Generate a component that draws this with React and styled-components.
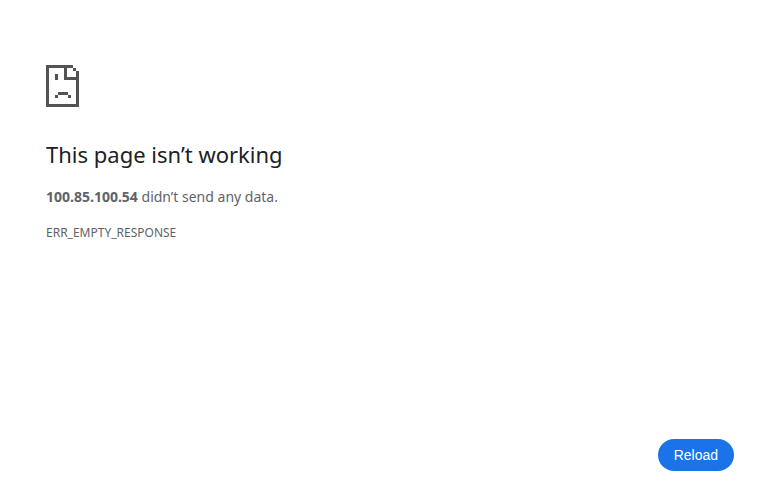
import React from 'react';
import styled, { createGlobalStyle } from 'styled-components';

const GlobalStyle = createGlobalStyle`
  *, *::before, *::after { box-sizing: border-box; }
  body {
    margin: 0;
    background: #fff;
    color: #5f6368;
    font-family: "Noto Sans", sans-serif;
    font-size: 14px;
    line-height: 22px;
  }
`;

const Page = styled.div`
  display: flex;
  flex-direction: column;
  justify-content: space-between;
  gap: 24px;
  width: 100%;
  max-width: 736px;
  min-height: 100vh;
  margin: 0 auto;
  padding: 65px 24px 22px;
`;

const Message = styled.main`
  display: flex;
  flex-direction: column;
  align-items: flex-start;
`;

const SadPage = styled.svg`
  display: block;
  width: 33px;
  height: 42px;
  margin-bottom: 33px;
  fill: #535353;
`;

const Title = styled.h1`
  margin: 0 0 18px;
  color: #202124;
  font-size: 22px;
  font-weight: 400;
  line-height: 28px;
`;

const Summary = styled.p`
  margin: 0 0 14px;
`;

const ErrorCode = styled.div`
  font-size: 12px;
`;

const Actions = styled.div`
  display: flex;
  justify-content: flex-end;
`;

const PrimaryButton = styled.button`
  height: 32px;
  padding: 0 16px;
  border: 0;
  border-radius: 16px;
  background: #1a73e8;
  color: #fff;
  font-family: "Liberation Sans", sans-serif;
  font-size: 14px;
  cursor: pointer;

  &:hover { background: #1b66c9; }
`;

export default function App() {
  return (
    <>
      <GlobalStyle />
      <Page>
        <Message>
          <SadPage viewBox="0 0 33 42" shapeRendering="crispEdges" aria-hidden="true">
            <path d="M0 0H27V3H21V12H30V6H33V42H0ZM3 3V39H30V15H18V3Z" fillRule="evenodd" />
            <path d="M27 3h3v3h-3zM9 9h3v6h-3zM12 27h10v3h-10zM9 30h3v3h-3zM22 30h3v3h-3z" />
          </SadPage>
          <Title>This page isn’t working</Title>
          <Summary>
            <strong>100.85.100.54</strong> didn’t send any data.
          </Summary>
          <ErrorCode>ERR_EMPTY_RESPONSE</ErrorCode>
        </Message>
        <Actions>
          <PrimaryButton type="button" onClick={() => window.location.reload()}>Reload</PrimaryButton>
        </Actions>
      </Page>
    </>
  );
}
